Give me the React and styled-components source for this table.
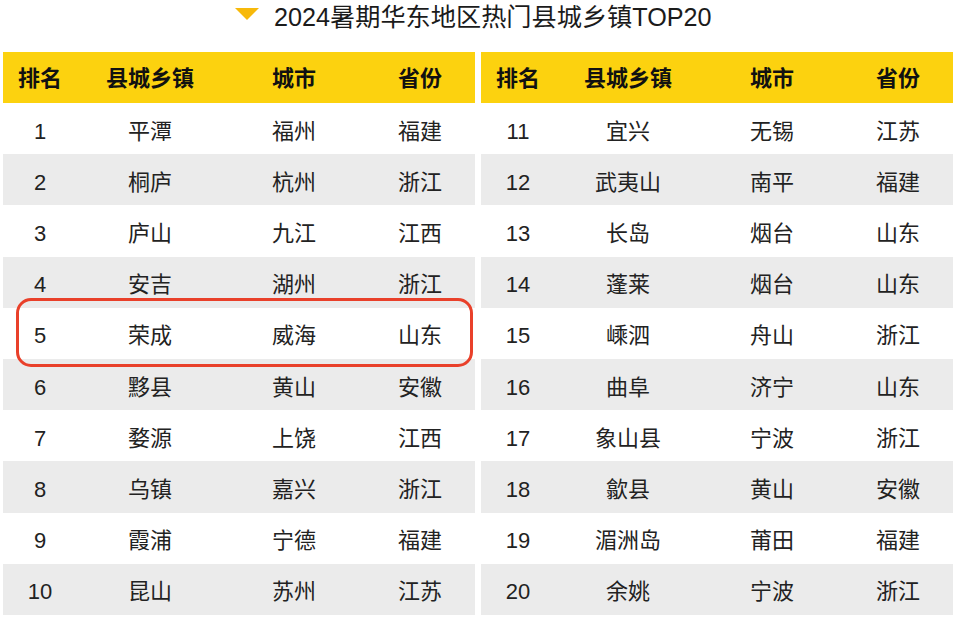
import styled, { createGlobalStyle } from 'styled-components';

const GlobalStyle = createGlobalStyle`
  html, body {
    margin: 0;
    padding: 0;
    background: #fff;
  }
  body {
    font-family: 'Liberation Sans', 'Noto Sans CJK SC', sans-serif;
    color: #1f1f1f;
  }
`;

const leftRows = [
  ['1', '平潭', '福州', '福建'],
  ['2', '桐庐', '杭州', '浙江'],
  ['3', '庐山', '九江', '江西'],
  ['4', '安吉', '湖州', '浙江'],
  ['5', '荣成', '威海', '山东'],
  ['6', '黟县', '黄山', '安徽'],
  ['7', '婺源', '上饶', '江西'],
  ['8', '乌镇', '嘉兴', '浙江'],
  ['9', '霞浦', '宁德', '福建'],
  ['10', '昆山', '苏州', '江苏'],
];

const rightRows = [
  ['11', '宜兴', '无锡', '江苏'],
  ['12', '武夷山', '南平', '福建'],
  ['13', '长岛', '烟台', '山东'],
  ['14', '蓬莱', '烟台', '山东'],
  ['15', '嵊泗', '舟山', '浙江'],
  ['16', '曲阜', '济宁', '山东'],
  ['17', '象山县', '宁波', '浙江'],
  ['18', '歙县', '黄山', '安徽'],
  ['19', '湄洲岛', '莆田', '福建'],
  ['20', '余姚', '宁波', '浙江'],
];

const headers = ['排名', '县城乡镇', '城市', '省份'];

const RankTable = ({ rows, highlight }) => (
  <Table>
    <HeadRow>
      {headers.map((h) => (
        <Cell key={h}>{h}</Cell>
      ))}
    </HeadRow>
    {rows.map((r, i) => (
      <Row key={r[0]} $shaded={i % 2 === 1} $marked={r[0] === highlight}>
        {r.map((c, j) => (
          <Cell key={j}>{c}</Cell>
        ))}
      </Row>
    ))}
  </Table>
);

const App = () => (
  <>
    <GlobalStyle />
    <Page>
      <Title>
        <Arrow />
        <TitleText>2024暑期华东地区热门县城乡镇TOP20</TitleText>
      </Title>
      <Tables>
        <RankTable rows={leftRows} highlight="5" />
        <RankTable rows={rightRows} />
      </Tables>
    </Page>
  </>
);

export default App;

const Page = styled.div`
  width: 960px;
  height: 623px;
  overflow: hidden;
  background: #fff;
`;

const Title = styled.div`
  height: 52px;
  display: flex;
  align-items: flex-start;
  gap: 15px;
  padding-left: 235px;
  box-sizing: border-box;
`;

const Arrow = styled.span`
  margin-top: 8px;
  width: 0;
  height: 0;
  border-left: 12.5px solid transparent;
  border-right: 12.5px solid transparent;
  border-top: 12px solid #f7b90a;
`;

const TitleText = styled.h1`
  margin: 0;
  margin-top: 1px;
  font-size: 25.2px;
  line-height: 32px;
  font-weight: 400;
  color: #1b1b1b;
`;

const Tables = styled.div`
  display: flex;
  gap: 6px;
  padding-left: 3px;
`;

const Table = styled.div`
  width: 472px;
  display: flex;
  flex-direction: column;
`;

const HeadRow = styled.div`
  display: grid;
  grid-template-columns: 74px 146px 142px 110px;
  height: 51px;
  padding-top: 2px;
  box-sizing: border-box;
  align-items: center;
  background: #fcd20f;
  font-weight: 700;
  font-size: 22px;
  color: #111;
`;

const Row = styled.div`
  position: relative;
  z-index: ${({ $marked }) => ($marked ? 2 : 'auto')};
  display: grid;
  grid-template-columns: 74px 146px 142px 110px;
  height: 51.2px;
  padding-top: 6px;
  box-sizing: border-box;
  align-items: center;
  background: ${({ $shaded }) => ($shaded ? '#ebebeb' : '#fff')};
  font-size: 22px;
  color: #222;

  ${({ $marked }) =>
    $marked &&
    `
    &::after {
      content: '';
      position: absolute;
      left: 13px;
      right: 2px;
      top: -10px;
      bottom: -8px;
      border: 3px solid #e9402a;
      border-radius: 15px;
      pointer-events: none;
    }
  `}
`;

const Cell = styled.div`
  text-align: center;
  line-height: 1;
`;
